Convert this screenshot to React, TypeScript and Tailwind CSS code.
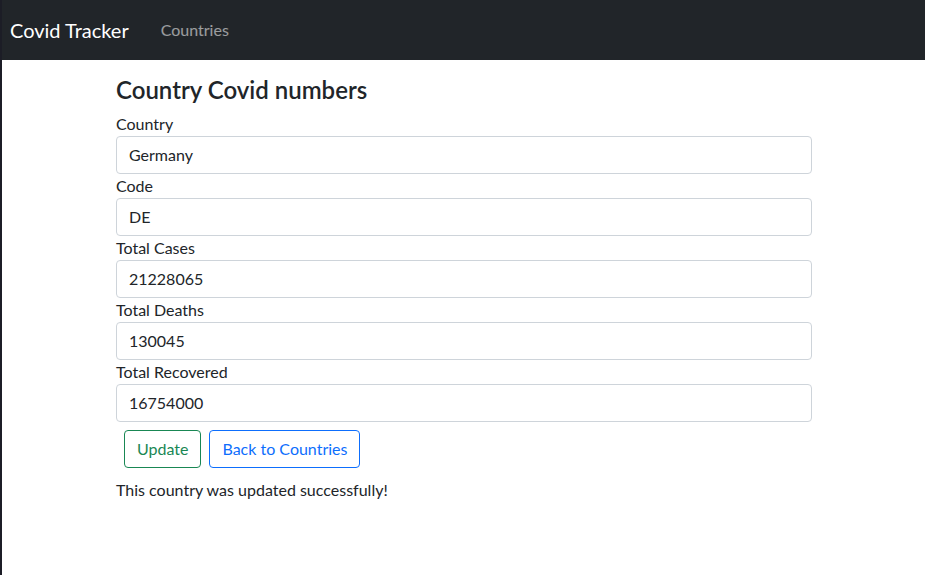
import React, { useState } from 'react';

const fields = [
  { label: 'Country', value: 'Germany' },
  { label: 'Code', value: 'DE' },
  { label: 'Total Cases', value: '21228065' },
  { label: 'Total Deaths', value: '130045' },
  { label: 'Total Recovered', value: '16754000' },
];

const App: React.FC = () => {
  const [values, setValues] = useState(fields.map((f) => f.value));

  return (
    <div
      className="min-h-screen bg-white border-l-2 border-[#1c1d26] text-[#212529]"
      style={{ fontFamily: '"Segoe UI", Lato, "Noto Sans", sans-serif' }}
    >
      {/* Navbar */}
      <nav className="h-[60px] bg-[#212529] flex items-center px-2">
        <a className="text-[20px] text-white mr-8 leading-none">Covid Tracker</a>
        <a className="text-[16px] text-white/55 leading-none">Countries</a>
      </nav>

      <div className="w-[696px] ml-[114px] pt-[16px]">
        <h4 className="text-[24px] font-semibold leading-[1.2] mb-[7px]">Country Covid numbers</h4>

        <form onSubmit={(e) => e.preventDefault()}>
          {fields.map((f, i) => (
            <div key={f.label}>
              <label className="block text-[16px] leading-[24px]">{f.label}</label>
              <input
                className="block w-full h-[38px] px-3 text-[16px] border border-[#ced4da] rounded-[4px] outline-none"
                value={values[i]}
                onChange={(e) => {
                  const next = [...values];
                  next[i] = e.target.value;
                  setValues(next);
                }}
              />
            </div>
          ))}

          <div className="flex gap-2 ml-2 mt-2">
            <button className="h-[38px] px-3 text-[16px] text-[#198754] border border-[#198754] rounded-[4px]">
              Update
            </button>
            <button className="h-[38px] px-3 text-[16px] text-[#0d6efd] border border-[#0d6efd] rounded-[4px]">
              Back to Countries
            </button>
          </div>
        </form>

        <p className="mt-[10px] text-[16px] leading-[24px]">This country was updated successfully!</p>
      </div>
    </div>
  );
};

export default App;
